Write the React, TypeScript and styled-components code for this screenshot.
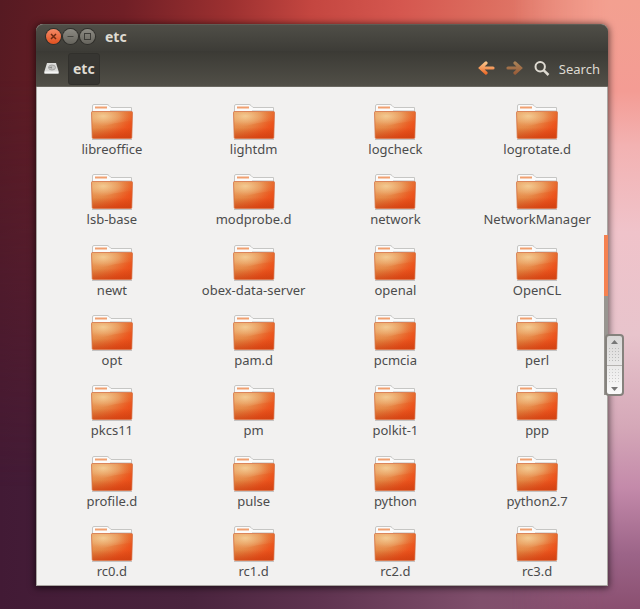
import React from "react";
import styled, { createGlobalStyle } from "styled-components";

const GlobalStyle = createGlobalStyle`
  * { box-sizing: border-box; }
  body {
    margin: 0;
    font-family: "Noto Sans", "Open Sans", sans-serif;
    font-size: 13px;
    line-height: 18px;
    color: #4c4c4c;
  }
  button { font: inherit; color: inherit; border: 0; padding: 0; background: none; }
`;

const Desktop = styled.main`
  position: relative;
  isolation: isolate;
  height: 100vh;
  min-height: 480px;
  display: flex;
  padding: 24px 32px 23px 36px;
  background: linear-gradient(to right, #421a35, #4a243e 30%, #5f3350 50%, #804f6c 75%, #8a5070);

  &::before,
  &::after {
    content: "";
    position: absolute;
    inset: 0;
    z-index: -1;
  }
  &::before {
    background: linear-gradient(95deg, #561a22, #701f26 18%, #9c3030 33%, #c44640 45%, #d5574f 58%, #dc6c5e 70%, #e68474 84%, #f5a096);
    mask-image: linear-gradient(#000 12%, #0009 40%, #0000 80%);
  }
  &::after {
    background: linear-gradient(#f3a090, #f49c94 15%, #f3b2b2 24%, #f0c3ca 38%, #e8c4cc 55%, #d5a8b8 70%, #c48aaa 80%, #9c6488 91%, #8a4f70);
    mask-image: linear-gradient(to left, #000 5%, #0000 20%);
  }
`;

const Window = styled.section`
  position: relative;
  flex: 1;
  min-width: 0;
  display: flex;
  flex-direction: column;
  border-radius: 7px 7px 0 0;
  background: #f2f1f0;
  box-shadow: 0 1px 7px 1px #0009;
`;

const TitleBar = styled.header`
  height: 27px;
  display: flex;
  align-items: center;
  gap: 2px;
  padding: 0 10px 3px;
  border-radius: 7px 7px 0 0;
  border-top: 1px solid #5f5d56;
  background: linear-gradient(#4f4e47, #3d3c37);
`;

const WindowButton = styled.button<{ $close?: boolean }>`
  display: block;
  width: 15px;
  height: 15px;
  border-radius: 50%;
  box-shadow: 0 0 0 1px #302f2b;
  background: ${(p) => (p.$close ? "linear-gradient(#f58a67, #e2511f)" : "linear-gradient(#8d8b83, #66645d)")};
  svg { display: block; }
`;

const Title = styled.h1`
  margin: 0 0 0 8px;
  font-size: 14px;
  line-height: 18px;
  font-weight: 700;
  color: #dfdbd2;
`;

const Toolbar = styled.nav`
  height: 36px;
  display: flex;
  align-items: center;
  padding: 0 8px;
  color: #dfdbd2;
  background: linear-gradient(#3b3a35, #514f47);
  border-bottom: 1px solid #6b6962;
`;

const ToolButton = styled.button`
  display: flex;
  align-items: center;
  gap: 9px;
  svg { display: block; }
`;

const PathButton = styled.button`
  height: 32px;
  margin: 0 auto 0 9px;
  padding: 0 4px;
  border-radius: 3px;
  border: 1px solid #31302c;
  background: #373632;
  font-size: 14px;
  font-weight: 700;
`;

const Actions = styled.div`
  display: flex;
  align-items: center;
  gap: 11px;
`;

const Files = styled.ul`
  flex: 1;
  min-height: 0;
  margin: 0;
  padding: 17px 0 7px 5px;
  list-style: none;
  display: grid;
  grid-template-columns: repeat(4, 1fr);
  align-content: space-between;
  box-shadow: inset 1px 0 #aaa6a2, inset -1px -1px #aaa6a2;
`;

const FileItem = styled.li`
  display: flex;
  flex-direction: column;
  align-items: center;
  line-height: 16px;
  svg { display: block; flex: none; }
`;

const ScrollRail = styled.div`
  position: absolute;
  right: 0;
  top: 211px;
  width: 4px;
  height: 160px;
  background: linear-gradient(#f58150 0 61px, #989590 61px);
`;

const ScrollThumb = styled.div`
  position: absolute;
  right: -16px;
  top: 310px;
  width: 19px;
  height: 62px;
  display: grid;
  border: 2px solid #85827d;
  border-radius: 4px;
  overflow: hidden;
  background: linear-gradient(#d9d8d7, #fafafa);
`;

const ThumbButton = styled.button`
  display: grid;
  place-items: center;
  & + & { border-top: 1px solid #b5b3b0; }
  svg { display: block; }
`;

const folders = [
  "libreoffice", "lightdm", "logcheck", "logrotate.d",
  "lsb-base", "modprobe.d", "network", "NetworkManager",
  "newt", "obex-data-server", "openal", "OpenCL",
  "opt", "pam.d", "pcmcia", "perl",
  "pkcs11", "pm", "polkit-1", "ppp",
  "profile.d", "pulse", "python", "python2.7",
  "rc0.d", "rc1.d", "rc2.d", "rc3.d",
];

function FolderIcon({ id }: { id: string }) {
  return (
    <svg width="44" height="37" viewBox="0 0 44 37" aria-hidden="true">
      <defs>
        <linearGradient id={`${id}-base`} x1="0" y1="0" x2="1" y2="0.8">
          <stop offset="0" stopColor="#e6a055" />
          <stop offset="0.45" stopColor="#e27c38" />
          <stop offset="0.8" stopColor="#ec521b" />
          <stop offset="1" stopColor="#e54c16" />
        </linearGradient>
        <radialGradient id={`${id}-glow`} cx="0.28" cy="0.25" r="0.8">
          <stop offset="0" stopColor="#f4cc94" />
          <stop offset="0.5" stopColor="#eeae74" stopOpacity="0.55" />
          <stop offset="1" stopColor="#ea6a30" stopOpacity="0.05" />
        </radialGradient>
        <linearGradient id={`${id}-shade`} x1="0" y1="0" x2="0" y2="1">
          <stop offset="0.6" stopColor="#c83c10" stopOpacity="0" />
          <stop offset="1" stopColor="#c83c10" stopOpacity="0.6" />
        </linearGradient>
      </defs>
      <path d="M2 35.500H42" stroke="#00000030" />
      <path d="M2.500 10V2q0-1.500 1.500-1.500H17q1 0 2 1L21 3.500H41.500V10Z" fill="#fbfbfb" stroke="#c6c6c4" />
      <path d="M5 3.500H17" stroke="#f0a070" strokeWidth="2" />
      <path d="M20 6.500H41" stroke="#dededc" />
      <path d="M1.500 8.500Q1.500 7.500 2.500 7.500H41.500Q42.500 7.500 42.500 8.500L41.800 33.500Q41.800 34.500 40.800 34.500H3.200Q2.200 34.500 2.200 33.500Z" fill={`url(#${id}-base)`} />
      <path d="M2 8H42V17Q29 18 20 20.500T2.300 24Z" fill={`url(#${id}-glow)`} />
      <path d="M2 8H42L41.500 34H2.500Z" fill={`url(#${id}-glow)`} opacity="0.35" />
      <path d="M2 8H42L41.500 34H2.500Z" fill={`url(#${id}-shade)`} />
      <path d="M1.500 8.500Q1.500 7.500 2.500 7.500H41.500Q42.500 7.500 42.500 8.500L41.800 33.500Q41.800 34.500 40.800 34.500H3.200Q2.200 34.500 2.200 33.500Z" fill="none" stroke="#d1683c" strokeOpacity="0.7" />
    </svg>
  );
}

function ArrowIcon({ flip }: { flip?: boolean }) {
  const id = flip ? "arrow-next" : "arrow-back";
  return (
    <svg width="17" height="15" viewBox="0 0 17 15" aria-hidden="true">
      <defs>
        <linearGradient id={id} gradientUnits="userSpaceOnUse" x1="0" y1="1" x2="0" y2="13">
          <stop offset="0" stopColor={flip ? "#aa8358" : "#fbc88d"} />
          <stop offset="1" stopColor={flip ? "#9a5c38" : "#ee6a28"} />
        </linearGradient>
      </defs>
      <path
        d={flip ? "M2 7H14M9 2L14.500 7L9 12" : "M15 7H3M8 2L2.500 7L8 12"}
        fill="none"
        stroke={`url(#${id})`}
        strokeWidth="3.200"
        strokeLinecap="round"
      />
    </svg>
  );
}

export default function App() {
  return (
    <>
      <GlobalStyle />
      <Desktop>
        <Window aria-label="etc">
          <TitleBar>
            <WindowButton $close aria-label="Close">
              <svg width="15" height="15" viewBox="0 0 15 15"><path d="M5 5L10 10M10 5L5 10" stroke="#6e2a12" strokeWidth="1.500" /></svg>
            </WindowButton>
            <WindowButton aria-label="Minimize">
              <svg width="15" height="15" viewBox="0 0 15 15"><path d="M4.500 7.500H10.500" stroke="#45443f" /></svg>
            </WindowButton>
            <WindowButton aria-label="Maximize">
              <svg width="15" height="15" viewBox="0 0 15 15"><rect x="4.500" y="4.500" width="6" height="6" fill="none" stroke="#3c3b37" /></svg>
            </WindowButton>
            <Title>etc</Title>
          </TitleBar>
          <Toolbar aria-label="Location">
            <ToolButton aria-label="File System">
              <svg width="15" height="14" viewBox="0 0 15 14">
                <path d="M3 1H12L14.500 9V11.500H.5V9Z" fill="#dcdcda" />
                <path d="M.5 9.500H14.500V11.500H.5Z" fill="#f6f6f5" />
                <ellipse cx="8" cy="5.500" rx="3.500" ry="2.500" fill="#c4c4c2" stroke="#a3a3a1" />
                <path d="M4 5.500L8 4.500V6.500Z" fill="#8c8c8a" />
              </svg>
            </ToolButton>
            <PathButton>etc</PathButton>
            <Actions>
              <ToolButton aria-label="Back"><ArrowIcon /></ToolButton>
              <ToolButton aria-label="Forward"><ArrowIcon flip /></ToolButton>
              <ToolButton>
                <svg width="16" height="16" viewBox="0 0 16 16" aria-hidden="true">
                  <circle cx="6.200" cy="5.700" r="4.700" fill="none" stroke="#dfdbd2" strokeWidth="2" />
                  <path d="M9.800 9.300L14.500 14" stroke="#dfdbd2" strokeWidth="2.500" />
                </svg>
                Search
              </ToolButton>
            </Actions>
          </Toolbar>
          <Files>
            {folders.map((name, i) => (
              <FileItem key={name}>
                <FolderIcon id={`folder-${i}`} />
                <span>{name}</span>
              </FileItem>
            ))}
          </Files>
          <ScrollRail />
          <ScrollThumb>
            <ThumbButton aria-label="Scroll up">
              <svg width="15" height="28" viewBox="0 0 15 28"><path d="M7.500 4L11 8H4Z" fill="#777" /><path d="M2 12.500H13M2 15.500H13M2 18.500H13M2 21.500H13M2 24.500H13" stroke="#bbb" strokeDasharray="1 2" /></svg>
            </ThumbButton>
            <ThumbButton aria-label="Scroll down">
              <svg width="15" height="28" viewBox="0 0 15 28"><path d="M7.500 25L11 21H4Z" fill="#777" /><path d="M2 3.500H13M2 6.500H13M2 9.500H13M2 12.500H13M2 15.500H13" stroke="#ccc" strokeDasharray="1 2" /></svg>
            </ThumbButton>
          </ScrollThumb>
        </Window>
      </Desktop>
    </>
  );
}
